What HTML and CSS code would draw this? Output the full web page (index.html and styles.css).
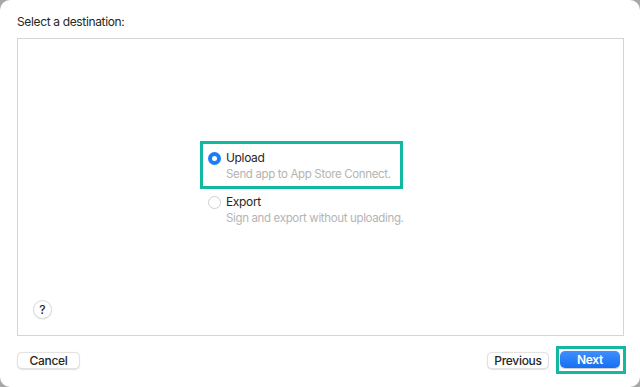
FILE: index.html
```html
<!DOCTYPE html>
<html>
<head>
<meta charset="utf-8">
<link rel="stylesheet" href="styles.css">
</head>
<body>
<div class="window">
  <div class="title">Select a destination:</div>
  <div class="box">
    <div class="options">
      <div class="option highlighted">
        <span class="radio selected"></span>
        <div class="texts">
          <div class="label">Upload</div>
          <div class="desc">Send app to App Store Connect.</div>
        </div>
      </div>
      <div class="option">
        <span class="radio"></span>
        <div class="texts">
          <div class="label">Export</div>
          <div class="desc">Sign and export without uploading.</div>
        </div>
      </div>
    </div>
    <div class="help">?</div>
  </div>
  <div class="footer">
    <button class="btn cancel">Cancel</button>
    <div class="spacer"></div>
    <button class="btn prev">Previous</button>
    <div class="next-wrap"><button class="btn next">Next</button></div>
  </div>
</div>
</body>
</html>
```
FILE: styles.css
```css
html, body {
  margin: 0;
  padding: 0;
  background: #a8a8a8;
}
body {
  width: 640px;
  height: 387px;
  overflow: hidden;
  font-family: Inter, "Liberation Sans", sans-serif;
  color: #262626;
  letter-spacing: -0.35px;
}
.window {
  width: 640px;
  height: 387px;
  box-sizing: border-box;
  background: #ffffff;
  border-radius: 10px;
  padding: 14px 16px 0 17px;
  display: flex;
  flex-direction: column;
}
.title {
  font-size: 12px;
  line-height: 16px;
  height: 16px;
  margin-bottom: 8px;
  color: #262626;
}
.box {
  height: 298px;
  box-sizing: border-box;
  border: 1px solid #d4d4d4;
  display: flex;
  flex-direction: column;
  padding: 102px 0 16px 182px;
}
.options {
  display: flex;
  flex-direction: column;
  gap: 5px;
}
.option {
  display: flex;
  align-items: flex-start;
  gap: 5px;
  padding: 0 0 0 8px;
  width: max-content;
}
.option.highlighted {
  border: 3px solid #13b8a0;
  padding: 6px 9px 4px 5px;
}
.radio {
  width: 13px;
  height: 13px;
  box-sizing: border-box;
  border-radius: 50%;
  border: 1px solid #cfcfcf;
  background: #fff;
  margin-top: 2px;
  flex: none;
}
.radio.selected {
  border: none;
  background: #1d7cf7;
  display: flex;
  align-items: center;
  justify-content: center;
}
.radio.selected::after {
  content: "";
  width: 5px;
  height: 5px;
  border-radius: 50%;
  background: #fff;
}
.label {
  font-size: 12px;
  line-height: 16px;
  color: #262626;
}
.desc {
  font-size: 11.5px;
  line-height: 16px;
  color: #b4b4b4;
}
.help {
  margin-top: auto;
  margin-left: -167px;
  width: 19px;
  height: 19px;
  box-sizing: border-box;
  border-radius: 50%;
  border: 1px solid #dcdcdc;
  box-shadow: 0 0.5px 1px rgba(0,0,0,0.12);
  font-size: 12px;
  font-weight: 500;
  line-height: 17px;
  text-align: center;
  letter-spacing: 0;
  color: #262626;
  background: #fff;
}
.footer {
  display: flex;
  align-items: center;
  margin-top: 10px;
}
.spacer {
  flex: 1;
}
.btn {
  font-family: Inter, "Liberation Sans", sans-serif;
  font-size: 12px;
  font-weight: 500;
  letter-spacing: -0.3px;
  height: 17px;
  line-height: 15px;
  padding: 0;
  border-radius: 5px;
  border: 1px solid #e2e2e2;
  background: #fff;
  color: #262626;
  box-shadow: 0 0.5px 1px rgba(0,0,0,0.12);
}
.cancel { width: 63px; }
.prev { width: 62px; margin-right: 7px; }
.next-wrap {
  border: 3px solid #13b8a0;
  padding: 2px 3px 3px 1px;
  margin-right: -2px;
  display: flex;
}
.next {
  width: 60px;
  border: none;
  color: #fff;
  font-weight: 600;
  background: linear-gradient(#3f8ffc, #1670f3);
  box-shadow: 0 0.5px 1px rgba(0,0,0,0.2);
}
```
